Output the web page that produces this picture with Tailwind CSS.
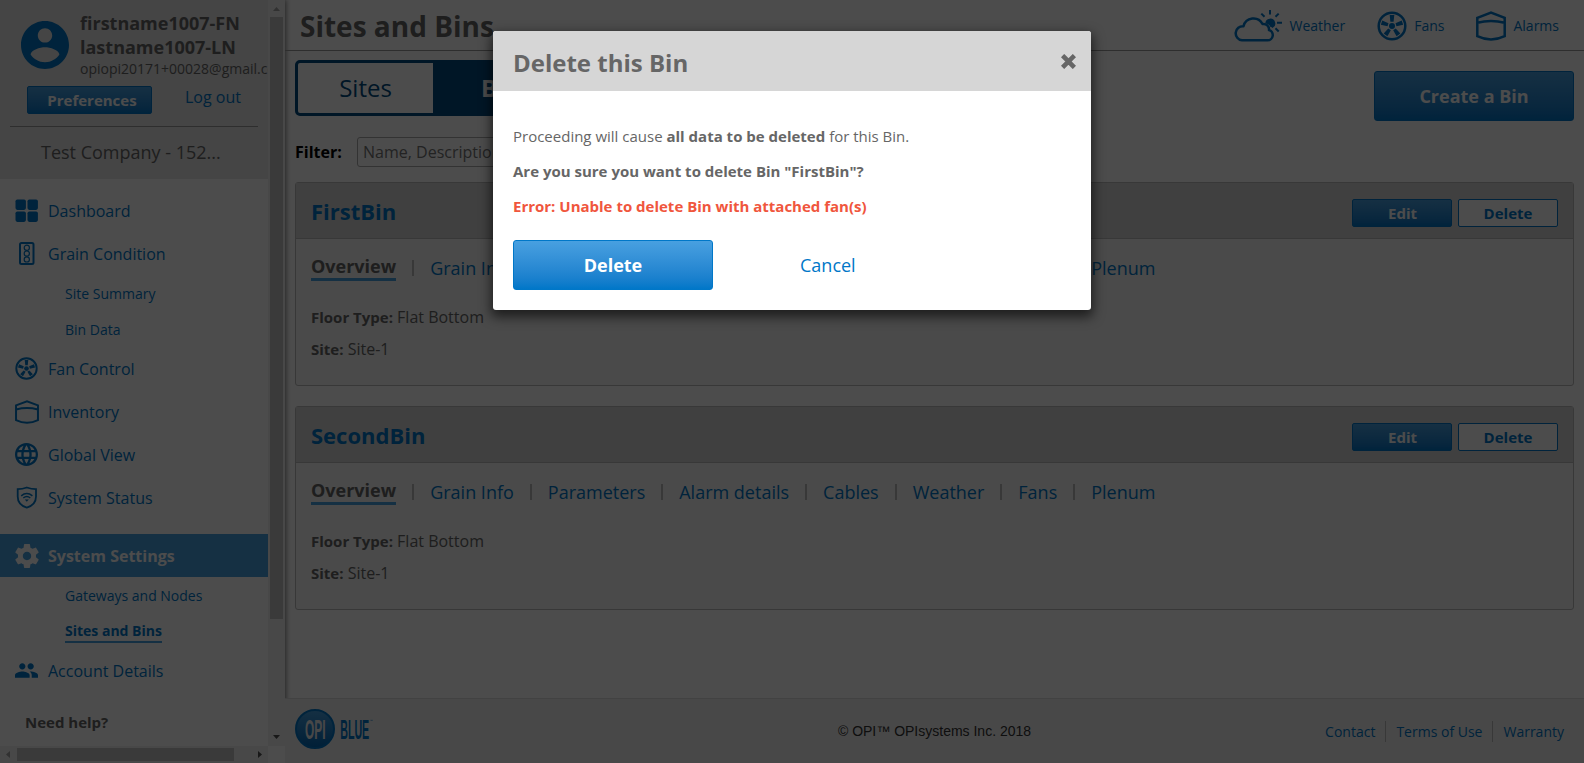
<!DOCTYPE html>
<html lang="en">
<head>
<meta charset="utf-8">
<title>Sites and Bins</title>
<script src="https://cdn.jsdelivr.net/npm/@tailwindcss/browser@4"></script>
</head>
<body class="w-[1584px] h-[763px] overflow-hidden relative bg-white font-['Open_Sans',sans-serif] text-[#666]">

<svg class="hidden">
  <symbol id="fan" viewBox="0 0 30 30">
    <circle cx="15" cy="15" r="13.300" fill="none" stroke="currentColor" stroke-width="2.500"/>
    <circle cx="15" cy="15" r="3" fill="currentColor"/>
    <g fill="currentColor">
      <path d="M12.700 4h4.600l-.7 6.800h-3.200z"/>
      <path d="M12.700 4h4.600l-.7 6.800h-3.200z" transform="rotate(72 15 15)"/>
      <path d="M12.700 4h4.600l-.7 6.800h-3.200z" transform="rotate(144 15 15)"/>
      <path d="M12.700 4h4.600l-.7 6.800h-3.200z" transform="rotate(216 15 15)"/>
      <path d="M12.700 4h4.600l-.7 6.800h-3.200z" transform="rotate(288 15 15)"/>
    </g>
  </symbol>
  <symbol id="bin" viewBox="0 0 30 30">
    <path d="M1.300 6.800 15 1.600 28.700 6.800v18.400Q15 31.800 1.300 25.200zM1.300 11.800Q15 8.400 28.700 11.800" fill="none" stroke="currentColor" stroke-width="2.500"/>
  </symbol>
</svg>

<div class="flex h-[763px]">
  <!-- Sidebar -->
  <aside class="w-[285px] shrink-0 flex flex-col shadow-[1px_0_5px_rgba(0,0,0,.5)] text-[#0077c8]">
    <div class="flex h-[746px]">
      <div class="w-[268px] overflow-hidden">
        <div class="h-[179px] bg-[#e6e6e6] overflow-hidden text-[#666]">
          <div class="flex h-[86px] pt-[11px] pl-[21px] gap-[11px]">
            <svg class="w-12 h-12 mt-[10px] shrink-0 text-[#0077c8]" viewBox="2 2 20 20" fill="currentColor"><path d="M12 2C6.480 2 2 6.480 2 12s4.480 10 10 10 10-4.480 10-10S17.520 2 12 2zm0 3c1.660 0 3 1.340 3 3s-1.340 3-3 3-3-1.340-3-3 1.340-3 3-3zm0 14.200c-2.500 0-4.710-1.280-6-3.220.030-1.990 4-3.080 6-3.080 1.990 0 5.970 1.090 6 3.080-1.290 1.940-3.500 3.220-6 3.220z"/></svg>
            <div class="whitespace-nowrap">
              <div class="font-bold text-[18px] leading-6">firstname1007-FN</div>
              <div class="font-bold text-[18px] leading-6">lastname1007-LN</div>
              <div class="text-[14px] leading-[19px]">opiopi20171+00028@gmail.com</div>
            </div>
          </div>
          <div class="flex mx-[10px] pl-[17px] h-[41px] border-b border-[#999]">
            <div class="w-[125px] h-7 pl-[5px] rounded-[2px] border border-[#0077c8] bg-linear-to-b from-[#48a0e0] to-[#0077c8] text-white font-bold text-[15px] leading-[26px] text-center">Preferences</div>
            <div class="ml-[33px] text-[16px] leading-[22px] text-[#0077c8]">Log out</div>
          </div>
          <div class="pl-[41px] pt-3 text-[18px] leading-[26px]">Test Company - 152...</div>
        </div>

        <nav class="pt-[11px] text-[16px]">
          <div class="h-[43px] flex items-center pb-[2px] pl-[15px] gap-[10px]">
            <svg class="w-[23px] h-[23px]" viewBox="0 0 23 23" fill="currentColor"><rect x=".5" y=".5" width="10.400" height="10.400" rx="1.800"/><rect x="12.500" y=".5" width="10.400" height="10.400" rx="1.800"/><rect x=".5" y="12.500" width="10.400" height="10.400" rx="1.800"/><rect x="12.500" y="12.500" width="10.400" height="10.400" rx="1.800"/></svg>
            <span>Dashboard</span>
          </div>
          <div class="h-[43px] flex items-center pb-[2px] pl-[15px] gap-[10px]">
            <svg class="w-[23px] h-[23px]" viewBox="0 0 23 23" fill="none" stroke="currentColor"><rect x="5" y="1" width="13.500" height="21" rx="1.500" stroke-width="2"/><circle cx="11.800" cy="5.800" r="2.600" stroke-width="1.200"/><circle cx="11.800" cy="11.600" r="2.600" stroke-width="1.200"/><circle cx="11.800" cy="17.400" r="2.600" stroke-width="1.200"/></svg>
            <span>Grain Condition</span>
          </div>
          <div class="h-9 pl-[65px] text-[14px] leading-9">Site Summary</div>
          <div class="h-9 pl-[65px] text-[14px] leading-9">Bin Data</div>
          <div class="h-[43px] flex items-center pb-[2px] pl-[15px] gap-[10px]">
            <svg class="w-[23px] h-[23px]"><use href="#fan"/></svg>
            <span>Fan Control</span>
          </div>
          <div class="h-[43px] flex items-center pb-[2px] pl-[15px] gap-[9px]">
            <svg class="w-6 h-6"><use href="#bin"/></svg>
            <span>Inventory</span>
          </div>
          <div class="h-[43px] flex items-center pb-[2px] pl-[15px] gap-[10px]">
            <svg class="w-[23px] h-[23px]" viewBox="2 2 20 20" fill="currentColor"><path d="M11.990 2C6.470 2 2 6.480 2 12s4.470 10 9.990 10C17.520 22 22 17.520 22 12S17.520 2 11.990 2zm6.930 6h-2.950c-.320-1.250-.780-2.450-1.380-3.560 1.840.630 3.370 1.910 4.330 3.560zM12 4.040c.830 1.200 1.480 2.530 1.910 3.960h-3.820c.430-1.430 1.080-2.760 1.910-3.960zM4.260 14C4.100 13.360 4 12.690 4 12s.1-1.360.26-2h3.380c-.080.660-.140 1.320-.140 2 0 .680.060 1.340.140 2H4.260zm.820 2h2.950c.320 1.250.780 2.450 1.380 3.560-1.840-.630-3.370-1.900-4.330-3.560zm2.950-8H5.080c.960-1.660 2.490-2.930 4.330-3.560C8.810 5.550 8.350 6.750 8.030 8zM12 19.960c-.830-1.200-1.480-2.530-1.910-3.960h3.820c-.430 1.430-1.080 2.760-1.910 3.960zM14.340 14H9.660c-.090-.660-.160-1.320-.160-2 0-.680.070-1.350.160-2h4.680c.090.650.160 1.320.160 2 0 .680-.070 1.340-.160 2zm.250 5.560c.600-1.110 1.060-2.310 1.380-3.560h2.950c-.960 1.650-2.490 2.930-4.330 3.560zM16.360 14c.080-.660.140-1.320.140-2 0-.680-.060-1.340-.140-2h3.380c.160.640.260 1.310.260 2s-.100 1.360-.260 2h-3.380z"/></svg>
            <span>Global View</span>
          </div>
          <div class="h-[43px] flex items-center pb-[2px] pl-[15px] gap-[10px]">
            <svg class="w-[23px] h-[23px]" viewBox="0 0 23 23" fill="none" stroke="currentColor"><path d="M11.800 1.500Q16.500 3.200 21 3.200V10.500C21 16 17 20 11.800 21.600 6.500 20 2.700 16 2.700 10.500V3.200Q7.300 3.200 11.800 1.500z" stroke-width="1.800"/><path d="M6.200 9.800Q11.800 5.200 17.400 9.800M8.300 12Q11.800 9.200 15.300 12" stroke-width="1.500"/><path d="M9.800 13.600h4l-2 2.200z" fill="currentColor" stroke="none"/></svg>
            <span>System Status</span>
          </div>
          <div class="mt-[14px] h-[43px] flex items-center pl-[15px] gap-[9px] bg-[#48a0e0] text-white font-bold">
            <svg class="w-6 h-6" viewBox="2 2 20 20" fill="currentColor"><path d="M19.430 12.980c.040-.320.070-.640.070-.980s-.030-.660-.070-.980l2.110-1.650c.190-.150.240-.420.120-.640l-2-3.460c-.120-.220-.390-.300-.610-.220l-2.490 1c-.520-.400-1.080-.730-1.690-.980l-.380-2.650C14.460 2.180 14.250 2 14 2h-4c-.250 0-.460.180-.490.420l-.380 2.650c-.610.250-1.170.590-1.690.980l-2.490-1c-.230-.090-.490 0-.610.220l-2 3.460c-.130.220-.070.490.120.640l2.110 1.650c-.040.320-.070.650-.070.980s.030.660.070.980l-2.110 1.650c-.190.150-.240.420-.120.640l2 3.460c.120.220.390.300.610.220l2.490-1c.520.400 1.080.730 1.690.980l.380 2.650c.030.240.240.420.490.420h4c.250 0 .460-.180.490-.420l.380-2.650c.610-.250 1.170-.590 1.690-.980l2.490 1c.230.090.490 0 .610-.220l2-3.460c.120-.220.070-.490-.120-.640l-2.110-1.650zM12 15.500c-1.930 0-3.500-1.570-3.500-3.500s1.570-3.500 3.500-3.500 3.500 1.570 3.500 3.500-1.570 3.500-3.500 3.500z"/></svg>
            <span>System Settings</span>
          </div>
          <div class="h-9 pl-[65px] text-[14px] leading-[38px]">Gateways and Nodes</div>
          <div class="h-[37px] pl-[65px] pt-2 text-[14px] leading-5 font-bold"><span class="inline-block h-5 border-b-2 border-[#48a0e0] box-content">Sites and Bins</span></div>
          <div class="h-[43px] flex items-center pb-[2px] pl-[15px] gap-[10px]">
            <svg class="w-[23px] h-[23px]" viewBox="1 1 22 22" fill="currentColor"><path d="M16 11c1.660 0 2.990-1.340 2.990-3S17.660 5 16 5c-1.660 0-3 1.340-3 3s1.340 3 3 3zm-8 0c1.660 0 2.990-1.340 2.990-3S9.660 5 8 5C6.340 5 5 6.340 5 8s1.340 3 3 3zm0 2c-2.330 0-7 1.170-7 3.500V19h14v-2.500c0-2.330-4.670-3.500-7-3.500zm8 0c-.290 0-.620.020-.970.050 1.160.840 1.970 1.970 1.970 3.450V19h6v-2.500c0-2.330-4.670-3.500-7-3.500z"/></svg>
            <span>Account Details</span>
          </div>
          <div class="pl-[25px] pt-[19px] text-[15px] leading-5 font-bold text-[#666]">Need help?</div>
        </nav>
      </div>
      <!-- Vertical scrollbar -->
      <div class="w-[17px] bg-[#f1f1f1] flex flex-col items-center">
        <svg class="w-[17px] h-[17px]" viewBox="0 0 17 17"><path d="M5 11h7L8.500 7z" fill="#a3a3a3"/></svg>
        <div class="w-[13px] h-[602px] bg-[#c1c1c1]"></div>
        <svg class="w-[17px] h-[17px] mt-auto" viewBox="0 0 17 17"><path d="M5 6h7L8.500 10z" fill="#505050"/></svg>
      </div>
    </div>
    <!-- Horizontal scrollbar -->
    <div class="h-[17px] flex">
      <div class="w-[268px] bg-[#f1f1f1] flex items-center">
        <svg class="w-[17px] h-[17px]" viewBox="0 0 17 17"><path d="M10 5v7L6 8.500z" fill="#a3a3a3"/></svg>
        <div class="w-[217px] h-[13px] bg-[#c1c1c1]"></div>
        <svg class="w-[17px] h-[17px] ml-auto" viewBox="0 0 17 17"><path d="M7 5v7l4-3.500z" fill="#505050"/></svg>
      </div>
      <div class="w-[17px] bg-white"></div>
    </div>
  </aside>

  <!-- Page -->
  <main class="flex-1 flex flex-col text-[#0077c8]">
    <header class="h-[51px] border-b border-[#999] flex items-center justify-between pl-[15px] pr-[25px]">
      <h1 class="text-[28px] font-bold text-[#666] pt-[2px]">Sites and Bins</h1>
      <div class="flex items-center text-[14px] pt-[2px]">
        <svg class="w-[50px] h-8 mr-[5px]" viewBox="0 0 50 32"><path d="M8 30.300H33.500a5.200 5.200 0 0 0 1.500-10.200A5.500 5.500 0 0 0 28.500 14 10.200 10.200 0 0 0 9.500 16.300 7 7 0 0 0 8 30.300z" fill="none" stroke="currentColor" stroke-width="2.500" stroke-linejoin="round"/><path d="M31.300 13.500a5 5 0 1 1 7.200 4.600q-1.300-1.400-2.300-1.400-1.200-3-4.900-3.200z" fill="currentColor"/><path d="M36 0v4.500M27.300 3.600l3.200 3.200M44.700 3.600l-3.200 3.200M43 12.700h5M41.500 18.300l3.200 3.200" stroke="currentColor" stroke-width="2" fill="none"/></svg>
        <span class="pb-[2px]">Weather</span>
        <svg class="w-[30px] h-[30px] ml-8 mr-[7px]"><use href="#fan"/></svg>
        <span class="pb-[2px]">Fans</span>
        <svg class="w-[30px] h-[30px] ml-8 mr-[7px]"><use href="#bin"/></svg>
        <span class="pb-[2px]">Alarms</span>
      </div>
    </header>

    <div class="px-[10px] flex-1">
      <div class="flex justify-between pt-[9px] h-[86px]">
        <div class="flex h-14 border-[3px] border-[#004a80] rounded-[5px] bg-[#004a80] text-[24px] leading-[49px] text-[#004a80]">
          <div class="w-[135px] text-center bg-white rounded-l-[2px]">Sites</div>
          <div class="w-[147px] text-center font-bold text-white">Bins</div>
        </div>
        <button class="mt-[11px] w-[200px] h-[50px] rounded-[3px] border border-[#0077c8] bg-linear-to-b from-[#48a0e0] to-[#0077c8] text-white font-bold text-[18px]">Create a Bin</button>
      </div>
      <div class="flex items-center h-[30px] text-[16px]">
        <span class="w-[62px] font-bold text-black pb-px">Filter:</span>
        <div class="w-[300px] h-[30px] border border-[#aaa] rounded-[3px] bg-white pl-[5px] leading-[29px] text-[#757575]">Name, Description...</div>
      </div>

      <section class="mt-[15px] h-[204px] border border-[#bbb] rounded-[3px] bg-[#f7f7f7]">
        <div class="h-14 bg-[#d6d6d6] border-b border-[#bbb] flex items-center justify-between px-[15px]">
          <h2 class="text-[22px] font-bold pt-[2px]">FirstBin</h2>
          <div class="flex gap-[6px] pt-[5px] font-bold text-[15px]">
            <button class="w-[100px] h-7 pl-px rounded-[2px] border border-[#0077c8] bg-linear-to-b from-[#48a0e0] to-[#0077c8] text-white">Edit</button>
            <button class="w-[100px] h-7 rounded-[2px] border border-[#0077c8] bg-white">Delete</button>
          </div>
        </div>
        <div class="flex pl-[15px] pt-[18px] text-[18px] leading-[22px] h-[62px] whitespace-nowrap">
          <span class="h-[21px] box-content border-b-3 border-[#48a0e0] text-[#666] font-bold leading-[18px]">Overview</span>
          <i class="w-[2px] h-4 mt-[3px] ml-4 mr-4 bg-[#bbb]"></i><span>Grain Info</span>
          <i class="w-[2px] h-4 mt-[3px] ml-4 mr-4 bg-[#bbb]"></i><span>Parameters</span>
          <i class="w-[2px] h-4 mt-[3px] ml-4 mr-4 bg-[#bbb]"></i><span>Alarm details</span>
          <i class="w-[2px] h-4 mt-[3px] ml-4 mr-4 bg-[#bbb]"></i><span>Cables</span>
          <i class="w-[2px] h-4 mt-[3px] ml-4 mr-4 bg-[#bbb]"></i><span>Weather</span>
          <i class="w-[2px] h-4 mt-[3px] ml-4 mr-4 bg-[#bbb]"></i><span>Fans</span>
          <i class="w-[2px] h-4 mt-[3px] ml-4 mr-4 bg-[#bbb]"></i><span>Plenum</span>
        </div>
        <div class="pl-[15px] text-[16px] leading-8 text-[#666]">
          <p><b class="text-[15px]">Floor Type:</b> Flat Bottom</p>
          <p><b class="text-[15px]">Site:</b> Site-1</p>
        </div>
      </section>

      <section class="mt-5 h-[204px] border border-[#bbb] rounded-[3px] bg-[#f7f7f7]">
        <div class="h-14 bg-[#d6d6d6] border-b border-[#bbb] flex items-center justify-between px-[15px]">
          <h2 class="text-[22px] font-bold pt-[2px]">SecondBin</h2>
          <div class="flex gap-[6px] pt-[5px] font-bold text-[15px]">
            <button class="w-[100px] h-7 pl-px rounded-[2px] border border-[#0077c8] bg-linear-to-b from-[#48a0e0] to-[#0077c8] text-white">Edit</button>
            <button class="w-[100px] h-7 rounded-[2px] border border-[#0077c8] bg-white">Delete</button>
          </div>
        </div>
        <div class="flex pl-[15px] pt-[18px] text-[18px] leading-[22px] h-[62px] whitespace-nowrap">
          <span class="h-[21px] box-content border-b-3 border-[#48a0e0] text-[#666] font-bold leading-[18px]">Overview</span>
          <i class="w-[2px] h-4 mt-[3px] ml-4 mr-4 bg-[#bbb]"></i><span>Grain Info</span>
          <i class="w-[2px] h-4 mt-[3px] ml-4 mr-4 bg-[#bbb]"></i><span>Parameters</span>
          <i class="w-[2px] h-4 mt-[3px] ml-4 mr-4 bg-[#bbb]"></i><span>Alarm details</span>
          <i class="w-[2px] h-4 mt-[3px] ml-4 mr-4 bg-[#bbb]"></i><span>Cables</span>
          <i class="w-[2px] h-4 mt-[3px] ml-4 mr-4 bg-[#bbb]"></i><span>Weather</span>
          <i class="w-[2px] h-4 mt-[3px] ml-4 mr-4 bg-[#bbb]"></i><span>Fans</span>
          <i class="w-[2px] h-4 mt-[3px] ml-4 mr-4 bg-[#bbb]"></i><span>Plenum</span>
        </div>
        <div class="pl-[15px] text-[16px] leading-8 text-[#666]">
          <p><b class="text-[15px]">Floor Type:</b> Flat Bottom</p>
          <p><b class="text-[15px]">Site:</b> Site-1</p>
        </div>
      </section>
    </div>

    <footer class="h-[65px] border-t border-[#ddd] bg-[#f2f2f2] grid grid-cols-3 pl-[10px] pr-5 pt-[10px] text-[14px]">
      <svg class="w-[84px] h-10" viewBox="0 0 84 40">
        <defs><linearGradient id="disc" x1="0" y1="0" x2="0" y2="1"><stop offset="0" stop-color="#48a0e0"/><stop offset="1" stop-color="#0068b8"/></linearGradient></defs>
        <circle cx="20" cy="20" r="19" fill="url(#disc)" stroke="#0077c8" stroke-width="2"/>
        <text x="10" y="30" textLength="20.500" lengthAdjust="spacingAndGlyphs" font-family="Liberation Sans" font-weight="bold" font-size="28" fill="#f2f2f2">OPI</text>
        <text x="45.200" y="30" textLength="29" lengthAdjust="spacingAndGlyphs" font-family="Liberation Sans" font-weight="bold" font-size="28" fill="#0077c8">BLUE</text>
        <text x="74.500" y="13" font-family="Liberation Sans" font-size="3.500" fill="#0077c8">™</text>
      </svg>
      <div class="text-center font-['Liberation_Sans',sans-serif] text-[14px] leading-[44px] pl-[10px] text-[#333]">© OPI™ OPIsystems Inc. 2018</div>
      <div class="flex justify-end items-center h-[19px] mt-[13px]">
        <span class="px-[10px] border-r border-[#bbb]">Contact</span>
        <span class="px-[10px] border-r border-[#bbb]">Terms of Use</span>
        <span class="pl-[10px]">Warranty</span>
      </div>
    </footer>
  </main>
</div>

<!-- Modal -->
<div class="absolute inset-0 bg-black/70">
  <div class="mx-auto mt-[31px] w-[598px] h-[279px] rounded-[3px] overflow-hidden bg-white shadow-[0_5px_12px_2px_rgba(0,0,0,.6)]">
    <div class="h-[60px] bg-[#d6d6d6] flex items-center justify-between pl-5 pr-[15px] pt-1">
      <h3 class="text-[24px] font-bold">Delete this Bin</h3>
      <svg class="w-[15px] h-[15px] mb-1" viewBox="0 0 15 15"><path d="M3.200 3.200l8.600 8.600M11.800 3.200l-8.600 8.600" stroke="#666" stroke-width="4.600" stroke-linecap="square"/></svg>
    </div>
    <div class="px-5 pt-7 text-[15px] leading-[35px]">
      <p>Proceeding will cause <b>all data to be deleted</b> for this Bin.</p>
      <p class="font-bold">Are you sure you want to delete Bin "FirstBin"?</p>
      <p class="font-bold text-[#f0563d]">Error: Unable to delete Bin with attached fan(s)</p>
      <div class="flex mt-4 text-[18px]">
        <button class="w-[200px] h-[50px] rounded-[3px] border border-[#0077c8] bg-linear-to-b from-[#48a0e0] to-[#0077c8] text-white font-bold">Delete</button>
        <span class="ml-[87px] leading-[50px] text-[#0077c8]">Cancel</span>
      </div>
    </div>
  </div>
</div>
</body>
</html>
